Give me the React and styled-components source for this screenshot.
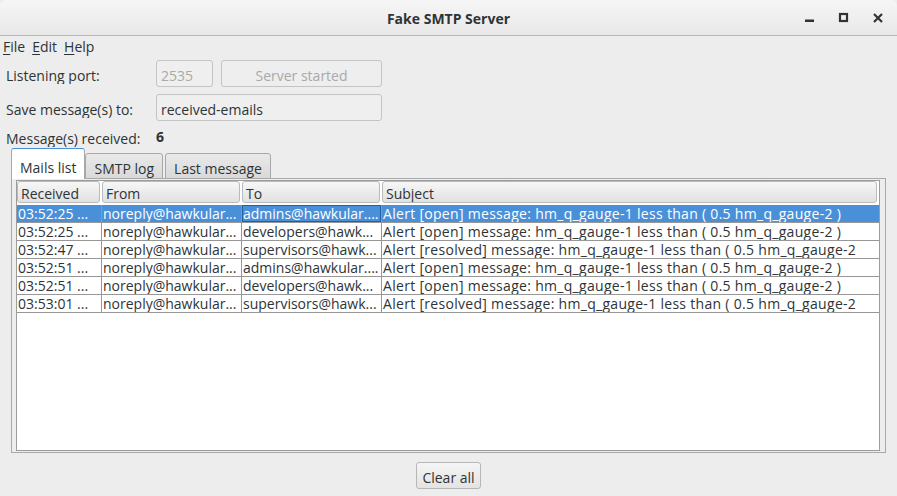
import React from "react";
import styled, { createGlobalStyle } from "styled-components";

const GlobalStyle = createGlobalStyle`
  html, body {
    margin: 0;
    padding: 0;
    background: #ededed;
  }
`;

const Window = styled.div`
  width: 897px;
  height: 496px;
  display: flex;
  flex-direction: column;
  background: #ededed;
  font-family: "Open Sans", "DejaVu Sans", sans-serif;
  font-size: 14px;
  color: #2e3436;
  overflow: hidden;
`;

const TitleBar = styled.div`
  height: 35px;
  flex-shrink: 0;
  display: grid;
  grid-template-columns: 1fr auto 1fr;
  align-items: center;
  background: linear-gradient(#f6f6f6, #e8e8e8);
  border-bottom: 1px solid #b8b8b8;
  border-radius: 6px 6px 0 0;
`;

const Title = styled.div`
  grid-column: 2;
  font-weight: bold;
  font-size: 14px;
  color: #2e3436;
  padding-top: 2px;
`;

const Controls = styled.div`
  justify-self: end;
  display: flex;
  padding-right: 2px;
`;

const ControlButton = styled.div`
  width: 34px;
  height: 35px;
  display: flex;
  align-items: center;
  justify-content: center;
`;

const MenuBar = styled.div`
  height: 21px;
  display: flex;
  align-items: center;
  gap: 7px;
  padding-left: 3px;
`;

const MenuItem = styled.span`
  line-height: 19px;
  u {
    text-decoration-thickness: 1px;
    text-underline-offset: 2px;
  }
`;

const Form = styled.div`
  display: flex;
  flex-direction: column;
  gap: 7px;
  padding: 3px 0 0 6px;
`;

const Row = styled.div`
  height: 27px;
  display: flex;
  align-items: center;
`;

const Label = styled.div`
  width: 150px;
  height: 18px;
  line-height: 20px;
  overflow: hidden;
  margin-top: 2px;
`;

const Field = styled.div`
  width: ${(p) => p.$width}px;
  height: 27px;
  box-sizing: border-box;
  border: 1px solid #c4c4c4;
  border-radius: 3px;
  background: #efefef;
  color: ${(p) => (p.$disabled ? "#a9a9a9" : "#2e3436")};
  display: flex;
  align-items: center;
  padding: 3px 4px 0;
`;

const DisabledButton = styled.div`
  width: 161px;
  height: 27px;
  margin-left: 8px;
  box-sizing: border-box;
  border: 1px solid #c4c4c4;
  border-radius: 3px;
  background: #eeeeee;
  color: #a9a9a9;
  display: flex;
  align-items: center;
  justify-content: center;
  padding-top: 3px;
`;

const CountRow = styled.div`
  display: flex;
  margin: -1px 0 2px;
  height: 19px;
  line-height: 19px;
`;

const CountValue = styled.span`
  font-weight: bold;
`;

const TabArea = styled.div`
  flex: 1;
  display: flex;
  flex-direction: column;
  margin: 0 11px;
  min-height: 0;
`;

const TabStrip = styled.div`
  display: flex;
  align-items: flex-end;
  height: 31px;
  margin-bottom: -1px;
  position: relative;
  z-index: 1;
`;

const Tab = styled.div`
  box-sizing: border-box;
  height: ${(p) => (p.$active ? 31 : 26)}px;
  padding: ${(p) => (p.$active ? 10 : 6)}px 8px 0;
  margin-right: ${(p) => p.$gap || 0}px;
  line-height: 18px;
  white-space: nowrap;
  border: 1px solid #a8a8a8;
  border-bottom: ${(p) => (p.$active ? "none" : "1px solid #a8a8a8")};
  border-top-color: ${(p) => (p.$active ? "#4a90d9" : "#a8a8a8")};
  border-radius: 3px 3px 0 0;
  background: ${(p) =>
    p.$active ? "#ffffff" : "linear-gradient(#e9e9e9, #d9d9d9)"};
`;

const Panel = styled.div`
  flex: 1;
  display: flex;
  border: 1px solid #a9a9a9;
  padding: 1px 5px 1px 4px;
  min-height: 0;
`;

const Table = styled.div`
  flex: 1;
  border: 1px solid #9c9c9c;
  background: #ffffff;
  display: flex;
  flex-direction: column;
`;

const HeaderRow = styled.div`
  display: grid;
  grid-template-columns: 83px 138px 138px 1fr;
  column-gap: 2px;
  padding: 0 2px 2px 0;
`;

const HeaderCell = styled.div`
  height: 22px;
  box-sizing: border-box;
  border: 1px solid #bababa;
  border-radius: 3px;
  background: linear-gradient(#f7f7f7, #e1e1e1);
  padding: 2px 0 0 3px;
  line-height: 19px;
  overflow: hidden;
  white-space: nowrap;
`;

const BodyRow = styled.div`
  display: grid;
  grid-template-columns: 84px 140px 140px 1fr;
  height: 18px;
  box-sizing: border-box;
  border-bottom: 1px solid #979797;
  background: ${(p) => (p.$selected ? "#4a90d9" : "#ffffff")};
  color: ${(p) => (p.$selected ? "#ffffff" : "#2e3436")};
`;

const Cell = styled.div`
  height: 17px;
  line-height: 18px;
  padding-left: 1px;
  overflow: hidden;
  white-space: nowrap;
  letter-spacing: ${(p) => (p.$wide ? "0.3px" : "0")};
  border-left: ${(p) => (p.$first ? "none" : "1px solid #979797")};
  box-shadow: ${(p) => (p.$focus ? "inset 0 0 0 1px #24609f" : "none")};
`;

const Footer = styled.div`
  display: flex;
  justify-content: center;
  padding: 9px 0 7px;
`;

const Button = styled.div`
  height: 27px;
  box-sizing: border-box;
  padding: 3px 5px 0;
  display: flex;
  align-items: center;
  border: 1px solid #b6b6b6;
  border-radius: 3px;
  background: linear-gradient(#f5f5f5, #e3e3e3);
`;

const MinimizeIcon = () => (
  <svg width="12" height="12" viewBox="0 0 12 12">
    <rect x="1" y="7.5" width="9" height="2.5" fill="#2e3436" />
  </svg>
);

const MaximizeIcon = () => (
  <svg width="12" height="12" viewBox="0 0 12 12">
    <rect x="2" y="2" width="7" height="7" fill="none" stroke="#2e3436" strokeWidth="2.2" />
  </svg>
);

const CloseIcon = () => (
  <svg width="12" height="12" viewBox="0 0 12 12">
    <path d="M2 2 L10 10 M10 2 L2 10" stroke="#2e3436" strokeWidth="2.2" />
  </svg>
);

const open = "Alert [open] message: hm_q_gauge-1 less than ( 0.5 hm_q_gauge-2 )";
const resolved =
  "Alert [resolved] message: hm_q_gauge-1 less than ( 0.5 hm_q_gauge-2";

const mails = [
  ["03:52:25 ...", "noreply@hawkular...", "admins@hawkular....", open],
  ["03:52:25 ...", "noreply@hawkular...", "developers@hawk...", open],
  ["03:52:47 ...", "noreply@hawkular...", "supervisors@hawk...", resolved],
  ["03:52:51 ...", "noreply@hawkular...", "admins@hawkular....", open],
  ["03:52:51 ...", "noreply@hawkular...", "developers@hawk...", open],
  ["03:53:01 ...", "noreply@hawkular...", "supervisors@hawk...", resolved],
];

const App = () => {
  return (
    <Window>
      <GlobalStyle />
      <TitleBar>
        <Title>Fake SMTP Server</Title>
        <Controls>
          <ControlButton><MinimizeIcon /></ControlButton>
          <ControlButton><MaximizeIcon /></ControlButton>
          <ControlButton><CloseIcon /></ControlButton>
        </Controls>
      </TitleBar>

      <MenuBar>
        <MenuItem><u>F</u>ile</MenuItem>
        <MenuItem><u>E</u>dit</MenuItem>
        <MenuItem><u>H</u>elp</MenuItem>
      </MenuBar>

      <Form>
        <Row>
          <Label>Listening port:</Label>
          <Field $width={57} $disabled>2535</Field>
          <DisabledButton>Server started</DisabledButton>
        </Row>
        <Row>
          <Label>Save message(s) to:</Label>
          <Field $width={226}>received-emails</Field>
        </Row>
        <CountRow>
          <Label as="span">Message(s) received:</Label>
          <CountValue>6</CountValue>
        </CountRow>
      </Form>

      <TabArea>
        <TabStrip>
          <Tab $active>Mails list</Tab>
          <Tab $gap={2}>SMTP log</Tab>
          <Tab>Last message</Tab>
        </TabStrip>
        <Panel>
          <Table>
            <HeaderRow>
              <HeaderCell>Received</HeaderCell>
              <HeaderCell>From</HeaderCell>
              <HeaderCell>To</HeaderCell>
              <HeaderCell>Subject</HeaderCell>
            </HeaderRow>
            {mails.map((mail, i) => (
              <BodyRow key={i} $selected={i === 0}>
                {mail.map((value, j) => (
                  <Cell
                    key={j}
                    $first={j === 0}
                    $wide={j === 3}
                    $focus={i === 0 && j === 2}
                  >
                    {value}
                  </Cell>
                ))}
              </BodyRow>
            ))}
          </Table>
        </Panel>
      </TabArea>

      <Footer>
        <Button>Clear all</Button>
      </Footer>
    </Window>
  );
};

export default App;
